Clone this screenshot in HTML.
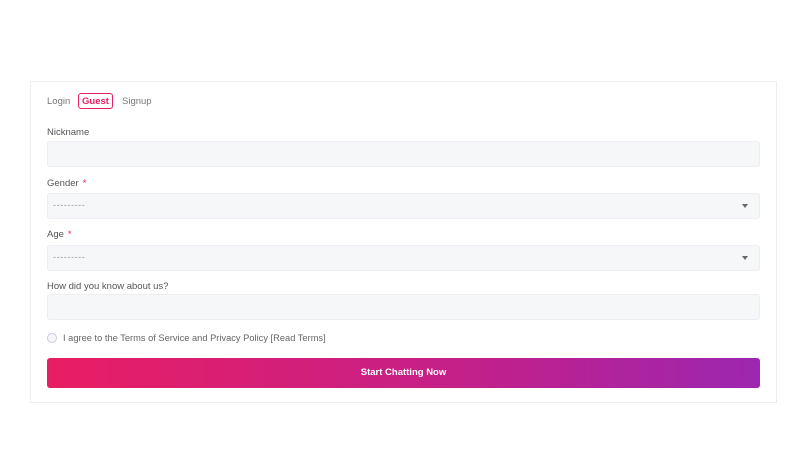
<!DOCTYPE html>
<html><head><style>
*{box-sizing:border-box;margin:0;padding:0}
body{width:800px;height:450px;background:#fff;font-family:"Liberation Sans",sans-serif;position:relative;overflow:hidden}
.card{position:absolute;left:30px;top:81px;width:747px;height:322px;border:1px solid #eeeeee;background:#fff}
.abs{position:absolute}
.lbl{position:absolute;left:16px;font-size:9.5px;color:#555}
.req{color:#e91e63;margin-left:4px}
.inp{position:absolute;left:16px;width:713px;height:26px;background:#f6f7f9;border:1px solid #eceef1;border-radius:3px}
.dash{position:absolute;left:5px;top:6px;font-size:9px;color:#999;letter-spacing:0.6px}
.arr{position:absolute;right:11px;top:10px;width:0;height:0;border-left:3px solid transparent;border-right:3px solid transparent;border-top:4px solid #666}
</style></head><body>
<div class="card">
  <div class="abs" style="left:16px;top:14px;font-size:9.5px;color:#777">Login</div>
  <div class="abs" style="left:47px;top:11px;width:35px;height:16px;border:1.5px solid #e91e63;border-radius:3px;font-size:9.5px;color:#e91e63;font-weight:bold;display:flex;align-items:center;justify-content:center">Guest</div>
  <div class="abs" style="left:91px;top:14px;font-size:9.5px;color:#777">Signup</div>

  <div class="lbl" style="top:45px">Nickname</div>
  <div class="inp" style="top:59px"></div>

  <div class="lbl" style="top:96px">Gender<span class="req">*</span></div>
  <div class="inp" style="top:111px"><span class="dash">---------</span><span class="arr"></span></div>

  <div class="lbl" style="top:147px">Age<span class="req">*</span></div>
  <div class="inp" style="top:163px"><span class="dash">---------</span><span class="arr"></span></div>

  <div class="lbl" style="top:199px">How did you know about us?</div>
  <div class="inp" style="top:212px"></div>

  <div class="abs" style="left:16px;top:251px;width:10px;height:10px;border:1px solid #ccd;border-radius:50%;background:#f6f7f9"></div>
  <div class="abs" style="left:32px;top:251px;font-size:9.3px;color:#666">I agree to the Terms of Service and Privacy Policy [Read Terms]</div>

  <div class="abs" style="left:16px;top:276px;width:713px;height:30px;border-radius:3px;background:linear-gradient(90deg,#e91e63,#c2208a 60%,#9c27b0);color:#fff;font-size:9.5px;font-weight:bold;text-align:center;line-height:30px">Start Chatting Now</div>
</div>
</body></html>
